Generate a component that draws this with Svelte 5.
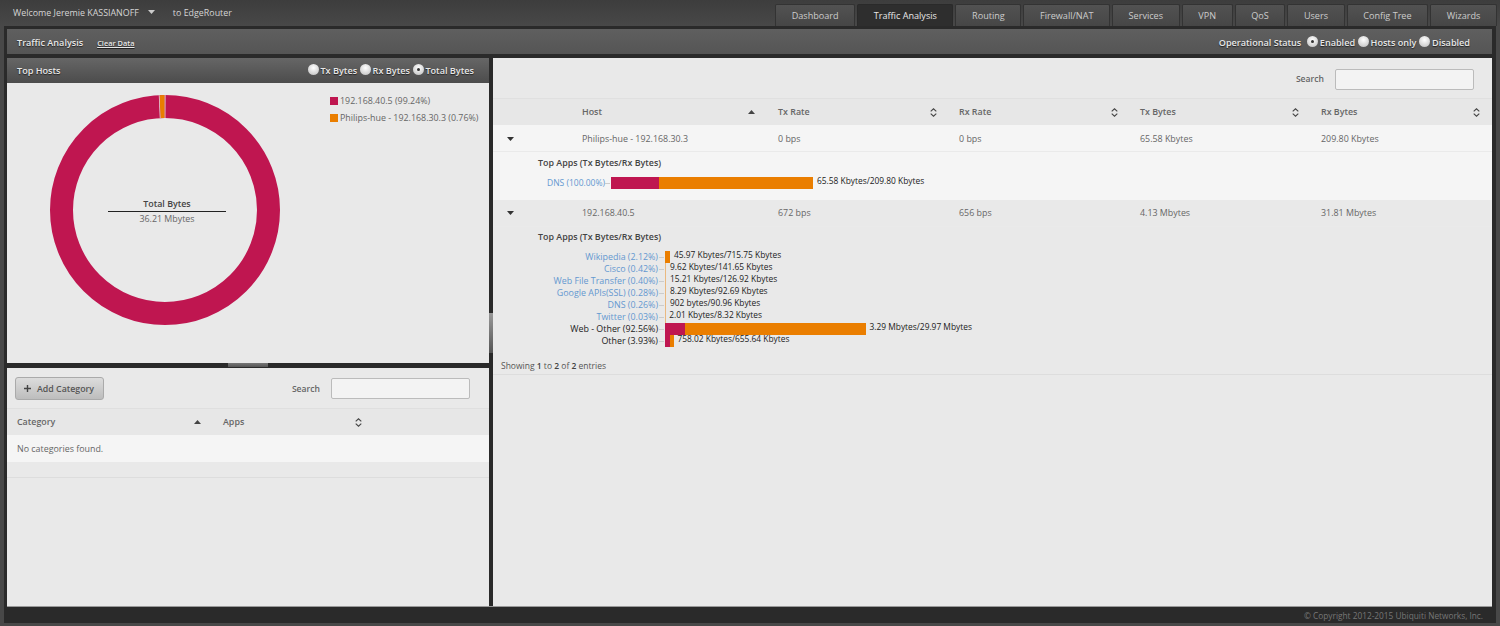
<script>
  const tabs = ['Dashboard','Traffic Analysis','Routing','Firewall/NAT','Services','VPN','QoS','Users','Config Tree','Wizards'];
  const cols = ['Tx Rate','Rx Rate','Tx Bytes','Rx Bytes'];
  const hostA = ['0 bps','0 bps','65.58 Kbytes','209.80 Kbytes'];
  const hostB = ['672 bps','656 bps','4.13 Mbytes','31.81 Mbytes'];
  const apps = [
    { n:'Wikipedia (2.12%)', link:true, r:0.3, o:4.7, v:'45.97 Kbytes/715.75 Kbytes' },
    { n:'Cisco (0.42%)', link:true, r:0, o:1, v:'9.62 Kbytes/141.65 Kbytes' },
    { n:'Web File Transfer (0.40%)', link:true, r:0, o:1, v:'15.21 Kbytes/126.92 Kbytes' },
    { n:'Google APIs(SSL) (0.28%)', link:true, r:0, o:1, v:'8.29 Kbytes/92.69 Kbytes' },
    { n:'DNS (0.26%)', link:true, r:0, o:1, v:'902 bytes/90.96 Kbytes' },
    { n:'Twitter (0.03%)', link:true, r:0, o:0.2, v:'2.01 Kbytes/8.32 Kbytes' },
    { n:'Web - Other (92.56%)', link:false, r:19.5, o:181, v:'3.29 Mbytes/29.97 Mbytes' },
    { n:'Other (3.93%)', link:false, r:4.5, o:4, v:'758.02 Kbytes/655.64 Kbytes' }
  ];
</script>

<div class="page">
  <header class="top">
    <div class="welcome">
      <span>Welcome Jeremie KASSIANOFF</span>
      <svg class="caret" width="7" height="4" viewBox="0 0 7 4"><path d="M0 0h7L3.5 4z" fill="#ccc"/></svg>
      <span class="to">to EdgeRouter</span>
    </div>
    <nav class="tabs">
      {#each tabs as t, i}
        <div class="tab" class:active={i === 1}>{t}</div>
      {/each}
    </nav>
  </header>

  <div class="frame">
    <div class="subhead">
      <div class="subtitle"><b>Traffic Analysis</b><span class="clear">Clear Data</span></div>
      <div class="status">
        <b class="oplabel">Operational Status</b>
        <span class="radio on"></span><b>Enabled</b>
        <span class="radio"></span><b>Hosts only</b>
        <span class="radio"></span><b>Disabled</b>
      </div>
    </div>

    <div class="panes">
      <div class="left">
        <section class="hosts">
          <div class="hosthead">
            <b>Top Hosts</b>
            <div class="radios">
              <span class="radio"></span><b>Tx Bytes</b>
              <span class="radio"></span><b>Rx Bytes</b>
              <span class="radio on"></span><b>Total Bytes</b>
            </div>
          </div>
          <div class="chart">
            <div class="donut">
              <svg width="230" height="230" viewBox="0 0 230 230">
                <circle cx="115" cy="115" r="103.5" fill="none" stroke="#bf1650" stroke-width="23"/>
                <path d="M109.5 0.2 L114.7 0 L114.7 23 L110.5 23.1 Z" fill="#ea7e00"/>
                <path d="M108.8 0.2 L109.5 0.2 L110.5 23.1 L109.8 23.1 Z M114.7 0 L115.5 0 L115.4 23 L114.7 23 Z" fill="#e9e9e9"/>
              </svg>
              <div class="center">
                <b>Total Bytes</b>
                <span>36.21 Mbytes</span>
              </div>
            </div>
            <ul class="legend">
              <li><i class="crimson"></i>192.168.40.5 (99.24%)</li>
              <li><i class="orange"></i>Philips-hue - 192.168.30.3 (0.76%)</li>
            </ul>
          </div>
        </section>
        <div class="hsplit"><span></span></div>
        <section class="cats">
          <div class="cattools">
            <button class="add"><svg width="7" height="7" viewBox="0 0 7 7"><path d="M3.5 0v7M0 3.5h7" stroke="#444" stroke-width="1.4"/></svg>Add Category</button>
            <div class="search"><span>Search</span><input class="catinput" aria-label="Search categories"/></div>
          </div>
          <div class="cathead">
            <b class="catname">Category<svg class="up" width="7" height="4" viewBox="0 0 7 4"><path d="M3.5 0L7 4H0z" fill="#444"/></svg></b>
            <b class="catapps">Apps<svg width="7" height="9" viewBox="0 0 7 9"><path d="M.7 3.4L3.5 .8l2.8 2.6M.7 5.6l2.8 2.6 2.8-2.6" fill="none" stroke="#444" stroke-width="1.1"/></svg></b>
          </div>
          <div class="empty">No categories found.</div>
          <div class="catfoot"></div>
        </section>
      </div>

      <div class="vsplit"><span></span></div>

      <main class="right">
        <div class="tools"><span>Search</span><input class="hostinput" aria-label="Search hosts"/></div>
        <div class="row thead">
          <div></div>
          <b class="cell hostcell">Host<svg width="7" height="4" viewBox="0 0 7 4"><path d="M3.5 0L7 4H0z" fill="#444"/></svg></b>
          {#each cols as c, i}
            <b class="cell" class:wide={i < 3}>{c}<svg width="7" height="9" viewBox="0 0 7 9"><path d="M.7 3.4L3.5 .8l2.8 2.6M.7 5.6l2.8 2.6 2.8-2.6" fill="none" stroke="#444" stroke-width="1.1"/></svg></b>
          {/each}
        </div>

        <div class="row light firstrow">
          <div class="exp"><svg width="7" height="4" viewBox="0 0 7 4"><path d="M0 0h7L3.5 4z" fill="#333"/></svg></div>
          <div class="cell">Philips-hue - 192.168.30.3</div>
          {#each hostA as v}<div class="cell">{v}</div>{/each}
        </div>
        <div class="detail light first">
          <b class="dtitle">Top Apps (Tx Bytes/Rx Bytes)</b>
          <div class="dnsrow">
            <a href="#dns">DNS (100.00%)</a><i class="tick"></i>
            <div class="seg crimson" style="width:48px"></div><div class="seg orange" style="width:154px"></div>
            <span class="val">65.58 Kbytes/209.80 Kbytes</span>
          </div>
        </div>

        <div class="row">
          <div class="exp"><svg width="7" height="4" viewBox="0 0 7 4"><path d="M0 0h7L3.5 4z" fill="#333"/></svg></div>
          <div class="cell">192.168.40.5</div>
          {#each hostB as v}<div class="cell">{v}</div>{/each}
        </div>
        <div class="detail second">
          <b class="dtitle">Top Apps (Tx Bytes/Rx Bytes)</b>
          <div class="appchart">
            {#each apps as a}
              <div class="approw">
                {#if a.link}<a class="name" href="#app">{a.n}</a>{:else}<span class="name dark">{a.n}</span>{/if}
                <i class="tick"></i>
                <div class="bars">
                  <div class="seg crimson" style="width:{a.r}px"></div>
                  <div class="seg orange" class:thin={a.o <= 1} style="width:{a.o}px"></div>
                  <span class="val">{a.v}</span>
                </div>
              </div>
            {/each}
          </div>
        </div>
        <div class="info">Showing <b>1</b> to <b>2</b> of <b>2</b> entries</div>
      </main>
    </div>

    <footer class="foot">© Copyright 2012-2015 Ubiquiti Networks, Inc.</footer>
  </div>
</div>

<style>
  :global(body) { margin: 0; background: #474747; }
  .page {
    width: 1500px; height: 626px; overflow: hidden;
    background: linear-gradient(#3d3d3d, #484848 26px);
    font: 8.9px/12px "Open Sans", sans-serif; color: #666;
    display: flex; flex-direction: column;
  }
  b { font-weight: 600; }
  .top { height: 26px; display: flex; justify-content: space-between; align-items: flex-end; flex: none; }
  .welcome { height: 26px; padding-left: 13px; color: #d5d5d5; display: flex; align-items: center; }
  .caret { margin: 0 0 2px 9px; }
  .to { margin-left: 18px; }
  .tabs { display: flex; gap: 2px; padding-right: 3px; }
  .tab {
    height: 21px; padding: 0 15.6px; display: flex; align-items: center; font-size: 9.1px;
    color: #ccc; background: linear-gradient(#525252, #464646);
    border: 1px solid #333; border-bottom: 0; border-radius: 2px 2px 0 0;
  }
  .tab.active { background: #2e2e2e; color: #e8e8e8; border-color: #2a2a2a; }

  .frame {
    flex: none; height: 597px; margin: 0 4px 0 4px; background: #2a2a2a;
    padding: 3px 4px 0 3px; display: flex; flex-direction: column; box-sizing: border-box;
  }
  .subhead {
    height: 25px; flex: none; display: flex; justify-content: space-between; align-items: center;
    background: linear-gradient(#5f5f5f, #555); padding: 2px 22px 0 10px; box-sizing: border-box; color: #e8e8e8;
    text-shadow: 0 1px 1px #222; font-size: 9.1px;
  }
  .subtitle { display: flex; align-items: center; gap: 14px; }
  .clear { font-size: 7.4px; font-weight: 600; text-decoration: underline; }
  .status, .radios { display: flex; align-items: center; }
  .oplabel { margin-right: 3px; }
  .status b + .radio, .radios b + .radio { margin-left: 3px; }
  .radio {
    width: 11px; height: 11px; border-radius: 50%; flex: none; margin: -3px 1.5px 0 0; position: relative;
    background: radial-gradient(circle at 50% 35%, #fff, #d0d0d0 70%, #999);
  }
  .radio.on::after {
    content: ""; position: absolute; left: 4px; top: 4px; width: 3px; height: 3px;
    border-radius: 50%; background: #333;
  }

  .panes { flex: 1; min-height: 0; display: flex; margin-top: 4px; }
  .left { width: 482px; flex: none; display: flex; flex-direction: column; }
  .hosts { height: 305px; flex: none; background: #e9e9e9; }
  .hosthead {
    height: 25px; display: flex; justify-content: space-between; align-items: center;
    padding: 0 15px 0 10px; background: linear-gradient(#666, #4c4c4c); color: #e8e8e8;
    text-shadow: 0 1px 1px #222; font-size: 9.1px;
  }
  .chart { position: relative; height: 280px; }
  .donut { position: absolute; left: 43px; top: 12px; width: 230px; height: 230px; }
  .donut svg { display: block; }
  .center {
    position: absolute; left: 58px; top: 103px; width: 118px; text-align: center;
    display: flex; flex-direction: column; color: #666;
  }
  .center b { color: #444; padding-bottom: 1px; border-bottom: 1px solid #222; }
  .center span { margin-top: 1px; }
  .legend { position: absolute; left: 323px; top: 9px; margin: 0; padding: 0; list-style: none; }
  .legend li { height: 17px; display: flex; align-items: center; gap: 2px; white-space: nowrap; }
  .legend i { width: 8px; height: 8px; display: block; }
  .crimson { background: #bf1650; }
  .orange { background: #ea7e00; }

  .hsplit { height: 5px; flex: none; background: #2a2a2a; display: flex; justify-content: center; }
  .hsplit span { width: 40px; height: 4px; background: linear-gradient(#777, #555); }
  .cats { flex: 1; background: #e9e9e9; display: flex; flex-direction: column; }
  .cattools {
    height: 41px; flex: none; display: flex; align-items: center; justify-content: space-between;
    padding: 1px 19px 0 8px; border-bottom: 1px solid #dfdfdf; box-sizing: border-box;
  }
  .add {
    width: 89px; height: 23px; padding: 0 0 0 8px; font: 600 8.8px "Open Sans", sans-serif; color: #555;
    display: flex; align-items: center; gap: 6px;
    background: linear-gradient(#dcdcdc, #bdbdbd); border: 1px solid #aaa; border-radius: 3px;
  }
  .search { display: flex; align-items: center; gap: 11px; font-weight: 600; font-size: 8.6px; }
  input {
    display: block; box-sizing: border-box; background: #f3f3f3; border: 1px solid #bbb;
    border-radius: 2px; height: 21px; padding: 0;
  }
  .catinput { width: 139px; }
  .hostinput { width: 139px; }
  .cathead { height: 26px; flex: none; display: flex; align-items: center; background: #e7e7e7; }
  .catname { width: 206px; padding: 0 12.5px 0 10px; display: flex; justify-content: space-between; box-sizing: border-box; align-items: center; }
  .catapps { width: 149px; padding: 0 0 0 10px; display: flex; justify-content: space-between; align-items: center; box-sizing: border-box; }
  .empty { height: 27px; flex: none; background: #f5f5f5; padding-left: 10px; display: flex; align-items: center; }
  .catfoot { height: 15px; flex: none; border-bottom: 1px solid #ddd; }

  .vsplit { width: 4px; flex: none; background: #2a2a2a; position: relative; }
  .vsplit span { position: absolute; left: 0; top: 255px; width: 4px; height: 40px; background: linear-gradient(#999, #555); }
  .right { flex: 1; min-width: 0; background: #e9e9e9; }
  .tools {
    height: 41px; display: flex; align-items: center; justify-content: flex-end; gap: 11px;
    padding: 2px 18px 0 0; font-weight: 600; font-size: 8.6px; border-bottom: 1px solid #e0e0e0; box-sizing: border-box;
  }
  .row {
    height: 26px; display: grid; grid-template-columns: 77px 196px 181px 181px 181px 1fr;
    align-items: center;
  }
  .thead { background: #e7e7e7; }
  .light { background: #f5f5f5; }
  .firstrow { padding-top: 1px; box-sizing: border-box; }
  .cell { padding: 0 12px; display: flex; justify-content: space-between; align-items: center; }
  .cell.wide { padding-right: 10px; }
  .cell.hostcell { padding-right: 11px; }
  .exp { padding-left: 14px; display: flex; align-items: center; }
  .detail { padding-left: 45px; border-top: 1px solid #eaeaea; box-sizing: border-box; }
  .detail.first { height: 49px; padding-top: 5px; }
  .detail.second { height: 132px; padding-top: 4px; }
  .dtitle { display: block; color: #444; height: 12px; }
  .dnsrow { display: flex; align-items: center; height: 12px; margin-top: 8px; padding-left: 3px; }
  .dnsrow a { width: 64px; text-align: right; font-size: 8.5px; white-space: nowrap; }
  a { color: #6498d0; text-decoration: none; }
  .tick { width: 5px; height: 1px; margin: 0 1px 0 0; background: #ccc; flex: none; }
  .seg { height: 12px; flex: none; }
  .val { color: #222; margin-left: 4px; white-space: nowrap; position: relative; top: -2px; font-size: 8.4px; }
  .appchart { margin-top: 8px; }
  .approw { display: flex; align-items: center; height: 12px; }
  .name { width: 120px; margin-right: 1px; text-align: right; white-space: nowrap; }
  .dark { color: #222; }
  .bars { display: flex; align-items: center; }
  .thin { opacity: 0.45; }
  .info { height: 14px; padding-left: 8px; margin-top: 2px; border-bottom: 1px solid #ddd; color: #555; font-size: 8.5px; }
  .info b { color: #444; }
  .foot {
    height: 17px; flex: none; text-align: right; padding-right: 9px; color: #777; line-height: 17px; font-size: 8.3px;
    background: #2a2a2a; border-top: 1px solid #999; box-sizing: border-box;
  }
</style>
